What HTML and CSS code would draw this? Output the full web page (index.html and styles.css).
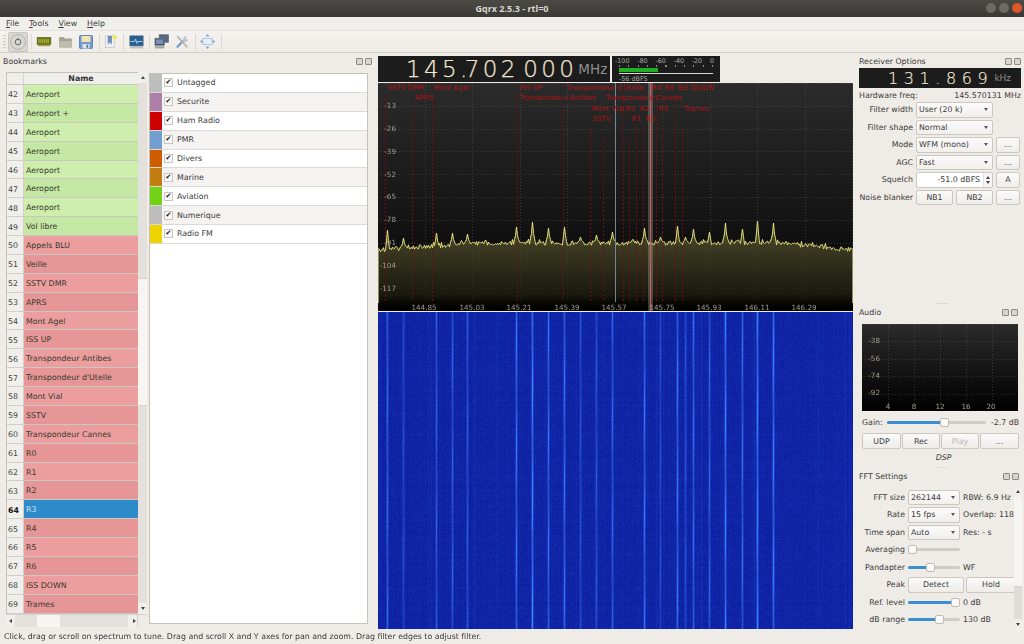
FILE: index.html
```html
<!DOCTYPE html>
<html lang="en">
<head>
<meta charset="utf-8">
<title>Gqrx 2.5.3 - rtl=0</title>
<link rel="stylesheet" href="styles.css">
</head>
<body>
<div class="app">
  <header class="titlebar">
    <span class="title">Gqrx 2.5.3 - rtl=0</span>
    <div class="winbtns"><i class="wb"></i><i class="wb"></i><i class="wb close"></i></div>
  </header>
  <nav class="menubar"><span><u>F</u>ile</span><span><u>T</u>ools</span><span><u>V</u>iew</span><span><u>H</u>elp</span></nav>
  <div class="toolbar">
    <div class="grip"></div>
    <button class="tb pressed"><svg width="16" height="16" viewBox="0 0 16 16"><circle cx="8" cy="8" r="7.5" fill="#d8d6d2" stroke="#b5b3af"/><circle cx="8" cy="8" r="2.8" fill="none" stroke="#666" stroke-width="1"/><path d="M8 4.2v2" stroke="#666"/></svg></button>
    <div class="sep s1"></div>
    <div class="ic"><svg width="16" height="11" viewBox="0 0 17 12"><rect x="1" y="1.5" width="15" height="8" fill="#6f7a18" stroke="#4a5212" stroke-width=".6"/><path d="M3 3.5v4M5 3.5v4M7 3.5v4M9 3.5v4M11 3.5v4M13 3.5v4" stroke="#b8c24a" stroke-width="1"/><rect x="2" y="9.5" width="13" height="1.6" fill="#a89a4a"/></svg></div>
    <div class="ic"><svg width="15" height="12" viewBox="0 0 16 13"><path d="M1 2.5Q1 1 2.5 1H6l1.5 1.8H14Q15 2.8 15 4V11.5Q15 12.4 14 12.4H2Q1 12.4 1 11.5Z" fill="#a5a395"/><path d="M1 5.5H15V11.5Q15 12.4 14 12.4H2Q1 12.4 1 11.5Z" fill="#bdbbab"/></svg></div>
    <div class="ic"><svg width="14" height="14" viewBox="0 0 14 14"><rect x=".5" y=".5" width="13" height="13" rx="1" fill="#6f9bcf" stroke="#4a7ab0" stroke-width=".8"/><rect x="2.5" y="1" width="9" height="6" fill="#f4e3b0"/><rect x="3.5" y="9" width="7" height="4.5" fill="#dfe3e8"/><rect x="7.5" y="9.7" width="1.6" height="3" fill="#4f6f95"/></svg></div>
    <div class="sep s2"></div>
    <div class="ic"><svg width="14" height="15" viewBox="0 0 15 15"><path d="M1.5 1.5H11V14H1.5Z" fill="#f1f2f4" stroke="#b9bcc2" stroke-width=".7"/><rect x="4" y="1.5" width="4.5" height="9" fill="#6f8fbc"/><path d="M4 10.5l2.2-2 2.3 2z" fill="#f1f2f4"/><circle cx="11.5" cy="3" r="2.3" fill="#f5e84a"/></svg></div>
    <div class="sep s3"></div>
    <div class="ic"><svg width="15" height="14" viewBox="0 0 16 15"><rect x=".5" y=".5" width="15" height="11.5" rx="1" fill="#2a5f92" stroke="#9aa4ae" stroke-width=".8"/><path d="M1.5 7H6l1-2.6L8.5 9l1-2h5" fill="none" stroke="#bfe4f5" stroke-width=".9"/><rect x="1" y="12.5" width="14" height="2" fill="#c2c2be"/></svg></div>
    <div class="sep s4"></div>
    <div class="ic"><svg width="15" height="15" viewBox="0 0 16 16"><rect x="5.5" y=".8" width="10" height="8" fill="#55678a" stroke="#666" stroke-width=".7"/><rect x="1" y="4.5" width="10" height="7.5" fill="#3d4e70" stroke="#777" stroke-width=".7"/><rect x="2.2" y="5.7" width="7.6" height="5" fill="#7a90b5"/><rect x="1" y="13" width="10" height="2.4" fill="#a3a39f"/></svg></div>
    <div class="ic"><svg width="14" height="14" viewBox="0 0 15 15"><path d="M2 13.5 9 6" stroke="#6f9ccb" stroke-width="2.4"/><path d="M2.5 1.5 13 13" stroke="#b4b8bc" stroke-width="2"/><path d="M9 6a3.2 3.2 0 0 1 4-4.4L11 3.6l1 1.4 2-1A3.2 3.2 0 0 1 10 7.5Z" fill="#bcc0c4"/></svg></div>
    <div class="sep s5"></div>
    <div class="ic"><svg width="15" height="15" viewBox="0 0 16 16"><rect x="3" y="4.7" width="10" height="6.6" fill="#e8eef5" stroke="#9dbbdb" stroke-width=".8"/><path d="M8 0 10 2.6H6ZM8 16 6 13.4H10ZM0 8 2.4 6V10ZM16 8 13.6 10V6Z" fill="#7aa3d0"/></svg></div>
    <div class="sep s6"></div>
  </div>

  <main class="main">
    <section class="bookmarks">
      <div class="dock-title"><span>Bookmarks</span><div class="floats"><i></i><i></i></div></div>
      <div class="bm-body">
        <div class="table">
          <div class="tbl-main">
            <div class="tbl-left">
              <div class="thead"><div class="corner"></div><div class="th">Name</div></div>
              <div class="rows">
                <div class="tr g1"><b>42</b><span>Aeroport</span></div>
                <div class="tr g2"><b>43</b><span>Aeroport +</span></div>
                <div class="tr g1"><b>44</b><span>Aeroport</span></div>
                <div class="tr g2"><b>45</b><span>Aeroport</span></div>
                <div class="tr g1"><b>46</b><span>Aeroport</span></div>
                <div class="tr g2"><b>47</b><span>Aeroport</span></div>
                <div class="tr g1"><b>48</b><span>Aeroport</span></div>
                <div class="tr g2"><b>49</b><span>Vol libre</span></div>
                <div class="tr r1"><b>50</b><span>Appels BLU</span></div>
                <div class="tr r2"><b>51</b><span>Veille</span></div>
                <div class="tr r1"><b>52</b><span>SSTV DMR</span></div>
                <div class="tr r2"><b>53</b><span>APRS</span></div>
                <div class="tr r1"><b>54</b><span>Mont Agel</span></div>
                <div class="tr r2"><b>55</b><span>ISS UP</span></div>
                <div class="tr r1"><b>56</b><span>Transpondeur Antibes</span></div>
                <div class="tr r2"><b>57</b><span>Transpondeur d'Utelle</span></div>
                <div class="tr r1"><b>58</b><span>Mont Vial</span></div>
                <div class="tr r2"><b>59</b><span>SSTV</span></div>
                <div class="tr r1"><b>60</b><span>Transpondeur Cannes</span></div>
                <div class="tr r2"><b>61</b><span>R0</span></div>
                <div class="tr r1"><b>62</b><span>R1</span></div>
                <div class="tr r2"><b>63</b><span>R2</span></div>
                <div class="tr sel"><b>64</b><span>R3</span></div>
                <div class="tr r2"><b>65</b><span>R4</span></div>
                <div class="tr r1"><b>66</b><span>R5</span></div>
                <div class="tr r2"><b>67</b><span>R6</span></div>
                <div class="tr r1"><b>68</b><span>ISS DOWN</span></div>
                <div class="tr r2"><b>69</b><span>Trames</span></div>
                <div class="tr p"><b></b><span></span></div>
              </div>
            </div>
            <div class="vscroll">
              <div class="sb-btn"><i class="up"></i></div>
              <div class="sb-a"></div><div class="sb-thumb"></div><div class="sb-b"></div>
              <div class="sb-btn"><i class="down"></i></div>
            </div>
          </div>
          <div class="hscroll">
            <div class="sb-btn"><i class="left"></i></div>
            <div class="hs-a"></div><div class="hs-thumb"></div><div class="hs-b"></div>
            <div class="sb-btn"><i class="right"></i></div>
            <div class="hs-corner"></div>
          </div>
        </div>
        <div class="tags">
          <div class="tag"><i class="sw c0"></i><span class="cb">✔</span><span>Untagged</span></div>
          <div class="tag alt"><i class="sw c1"></i><span class="cb">✔</span><span>Securite</span></div>
          <div class="tag"><i class="sw c2"></i><span class="cb">✔</span><span>Ham Radio</span></div>
          <div class="tag alt"><i class="sw c3"></i><span class="cb">✔</span><span>PMR</span></div>
          <div class="tag"><i class="sw c4"></i><span class="cb">✔</span><span>Divers</span></div>
          <div class="tag alt"><i class="sw c5"></i><span class="cb">✔</span><span>Marine</span></div>
          <div class="tag"><i class="sw c6"></i><span class="cb">✔</span><span>Aviation</span></div>
          <div class="tag alt"><i class="sw c0"></i><span class="cb">✔</span><span>Numerique</span></div>
          <div class="tag"><i class="sw c8"></i><span class="cb">✔</span><span>Radio FM</span></div>
        </div>
      </div>
    </section>

    <section class="center">
      <div class="readout">
        <div class="lcd"><span class="digits">145<span class="dot">.</span>702 000</span><span class="unit">MHz</span></div>
        <div class="meter">
          <div class="scale"><span>-100</span><span>-80</span><span>-60</span><span>-40</span><span>-20</span><span>0</span></div>
          <div class="ticks"></div>
          <div class="mbar"></div>
          <div class="mline"></div>
          <div class="mval">-56 dBFS</div>
        </div>
      </div>
      <div class="plot">
        <canvas id="spectrum" width="475" height="228"></canvas>
        <span class="bm" style="left:10px;top:0px">SSTV DMR</span>
        <span class="bm" style="left:56px;top:0px">Mont Agel</span>
        <span class="bm" style="left:37px;top:10px">APRS</span>
        <span class="bm" style="left:142px;top:0px">ISS UP</span>
        <span class="bm" style="left:142px;top:10px">Transpondeur Antibes</span>
        <span class="bm" style="left:189px;top:0px">Transpondeur d'Utelle</span>
        <span class="bm" style="left:228px;top:10px">Transpondeur Cannes</span>
        <span class="bm" style="left:214px;top:21px">Mont Vial</span>
        <span class="bm" style="left:215px;top:31px">SSTV</span>
        <span class="bm" style="left:248px;top:21px">R0</span>
        <span class="bm" style="left:262px;top:21px">R2</span>
        <span class="bm" style="left:281px;top:21px">R5</span>
        <span class="bm" style="left:306px;top:21px">Trames</span>
        <span class="bm" style="left:254px;top:31px">R1</span>
        <span class="bm" style="left:268px;top:31px">R3</span>
        <span class="bm" style="left:274px;top:0px">R4</span>
        <span class="bm" style="left:287px;top:0px">R6</span>
        <span class="bm" style="left:300px;top:0px">ISS DOWN</span>
        <span class="db" style="top:18px">-13</span>
        <span class="db" style="top:41px">-26</span>
        <span class="db" style="top:64px">-39</span>
        <span class="db" style="top:87px">-52</span>
        <span class="db" style="top:109px">-65</span>
        <span class="db" style="top:132px">-78</span>
        <span class="db" style="top:155px">-91</span>
        <span class="db" style="top:178px">-104</span>
        <span class="db" style="top:201px">-117</span>
        <span class="fq" style="left:46px">144.85</span>
        <span class="fq" style="left:94px">145.03</span>
        <span class="fq" style="left:141px">145.21</span>
        <span class="fq" style="left:189px">145.39</span>
        <span class="fq" style="left:236px">145.57</span>
        <span class="fq" style="left:284px">145.75</span>
        <span class="fq" style="left:331px">145.93</span>
        <span class="fq" style="left:379px">146.11</span>
        <span class="fq" style="left:426px">146.29</span>
      </div>
      <canvas id="waterfall" class="wf" width="475" height="317"></canvas>
    </section>

    <aside class="right">
      <section class="rx">
        <div class="dock-title"><span>Receiver Options</span><div class="floats"><i></i><i></i></div></div>
        <div class="lcd2"><span class="digits2">131.869</span><span class="unit2">kHz</span></div>
        <div class="hw"><span>Hardware freq:</span><span>145.570131 MHz</span></div>
        <div class="form">
          <label>Filter width</label><div class="combo wide">User (20 k)<i></i></div><div></div>
          <label>Filter shape</label><div class="combo wide">Normal<i></i></div><div></div>
          <label>Mode</label><div class="combo wide">WFM (mono)<i></i></div><button class="btn">...</button>
          <label>AGC</label><div class="combo wide">Fast<i></i></div><button class="btn">...</button>
          <label>Squelch</label><div class="spin"><span>-51.0 dBFS</span><div class="arrows"><i class="up"></i><i class="down"></i></div></div><button class="btn">A</button>
          <label>Noise blanker</label><div class="two"><button class="btn">NB1</button><button class="btn">NB2</button></div><button class="btn">...</button>
        </div>
      </section>
      <div class="grip-h g-a"></div>
      <section class="audio">
        <div class="dock-title"><span>Audio</span><div class="floats"><i></i><i></i></div></div>
        <div class="aplot">
          <canvas id="audioplot" width="156" height="87"></canvas>
          <span class="adb" style="top:12px">-38</span>
          <span class="adb" style="top:30px">-56</span>
          <span class="adb" style="top:47px">-74</span>
          <span class="adb" style="top:64px">-92</span>
          <span class="afq" style="left:26px">4</span>
          <span class="afq" style="left:52px">8</span>
          <span class="afq" style="left:78px">12</span>
          <span class="afq" style="left:104px">16</span>
          <span class="afq" style="left:129px">20</span>
        </div>
        <div class="gain"><span>Gain:</span><div class="slider s-gain"><div class="fill" style="width:58%"></div><i class="knob" style="left:58%"></i></div><span class="gval">-2.7 dB</span></div>
        <div class="abtns"><button class="btn">UDP</button><button class="btn">Rec</button><button class="btn off">Play</button><button class="btn">...</button></div>
        <div class="dsp">DSP</div>
      </section>
      <div class="grip-h g-b"></div>
      <section class="fft">
        <div class="dock-title"><span>FFT Settings</span><div class="floats"><i></i><i></i></div></div>
        <div class="fft-body">
          <div class="fft-form">
            <label>FFT size</label><div class="combo">262144<i></i></div><span class="note">RBW: 6.9 Hz</span>
            <label>Rate</label><div class="combo">15 fps<i></i></div><span class="note">Overlap: 118</span>
            <label>Time span</label><div class="combo">Auto<i></i></div><span class="note">Res: - s</span>
            <label>Averaging</label><div class="slider"><i class="knob" style="left:4px"></i></div><span></span>
            <label>Pandapter</label><div class="slider"><div class="fill" style="width:43%"></div><i class="knob" style="left:43%"></i></div><span class="note">WF</span>
            <label>Peak</label><div class="peak"><button class="btn">Detect</button><button class="btn">Hold</button></div>
            <label>Ref. level</label><div class="slider"><div class="fill" style="width:90%"></div><i class="knob" style="left:90%"></i></div><span class="note">0 dB</span>
            <label>dB range</label><div class="slider"><div class="fill" style="width:60%"></div><i class="knob" style="left:60%"></i></div><span class="note">130 dB</span>
          </div>
          <div class="vscroll fs">
            <div class="sb-btn"><i class="up"></i></div>
            <div class="sb-thumb2"></div><div class="sb-b2"></div>
            <div class="sb-btn"><i class="down"></i></div>
          </div>
        </div>
      </section>
    </aside>
  </main>
  <footer class="status">Click, drag or scroll on spectrum to tune. Drag and scroll X and Y axes for pan and zoom. Drag filter edges to adjust filter.</footer>
</div>
<script src="plots.js"></script>
</body>
</html>
```
FILE: styles.css
```css
* { box-sizing: border-box; }
html, body { margin: 0; padding: 0; }
body { font: 7.85px "DejaVu Sans", sans-serif; color: #3c3c3c; background: #efebe7; overflow: hidden; }
.app { width: 1024px; height: 644px; display: flex; flex-direction: column; overflow: hidden; }
button { font: inherit; color: inherit; padding: 0; }

.titlebar { height: 17px; flex: none; background: linear-gradient(#4b4a45, #3a3935); color: #d8d6d0; display: flex; align-items: center; justify-content: center; position: relative; }
.title { font: bold 9px "Open Sans", "DejaVu Sans", sans-serif; }
.winbtns { position: absolute; right: 2px; top: 3px; display: flex; gap: 3px; }
.wb { width: 10px; height: 10px; border-radius: 50%; background: #6b6a64; display: block; }
.wb.close { background: #e0562a; }

.menubar { height: 13px; flex: none; background: #f1efeb; display: flex; gap: 10px; padding-left: 6px; align-items: center; }
.toolbar { height: 23px; flex: none; background: linear-gradient(#f5f3ef, #efebe7); border-top: 1px solid #e4e1dc; border-bottom: 1px solid #d2cec8; display: flex; align-items: center; padding-left: 3px; }
.grip { width: 3px; height: 14px; margin-right: 2px; background: repeating-linear-gradient(#cfccc6 0 1px, transparent 1px 3px); }
.tb { width: 20px; height: 20px; border: 1px solid #c8c5bf; border-radius: 2px; background: #dbd8d3; display: flex; align-items: center; justify-content: center; }
.ic { width: 21px; height: 20px; display: flex; align-items: center; justify-content: center; }
.sep { width: 1px; height: 16px; background: #dcd9d3; flex: none; }
.s1 { margin: 0 1.5px 0 3px; }
.s2 { margin: 0 .5px 0 2.5px; }
.s3 { margin: 0 1.5px 0 1.5px; }
.s4 { margin: 0 .5px 0 2.5px; }
.s5 { margin: 0 .5px 0 2.5px; }
.s6 { margin: 0 0 0 3.5px; }

.main { flex: 1; display: flex; min-height: 0; }
.dock-title { height: 19px; display: flex; align-items: center; justify-content: space-between; padding: 0 0 0 3px; flex: none; }
.floats { display: flex; gap: 2px; }
.floats i { width: 7px; height: 7px; display: block; border: 1px solid #8f8c86; background: #d8d5cf; border-radius: 1px; }

.bookmarks { width: 378px; flex: none; padding-right: 6px; }
.bookmarks .dock-title { padding-bottom: 2px; }
.bm-body { display: flex; gap: 2px; padding-left: 6px; height: 555px; }
.table { width: 141px; height: 555px; flex: none; display: flex; flex-direction: column; }
.tbl-main { flex: 1; display: flex; min-height: 0; }
.tbl-left { width: 132px; flex: none; display: flex; flex-direction: column; border-left: 1px solid #c6c3bd; border-top: 1px solid #c6c3bd; }
.thead { height: 12px; flex: none; display: flex; background: #f0eeea; border-bottom: 1px solid #c9c6c0; }
.corner { width: 17px; border-right: 1px solid #d8d5cf; }
.th { flex: 1; text-align: center; font-weight: bold; line-height: 11px; color: #333; }
.rows { flex: 1; overflow: hidden; }
.tr { height: 18.875px; display: flex; align-items: center; }
.tr b { width: 17px; height: 100%; flex: none; font-weight: normal; background: #f1efeb; border-right: 1px solid #d2cfc9; border-bottom: 1px solid #d2cfc9; display: flex; align-items: center; padding: 2px 0 0 1px; color: #444; }
.tr span { flex: 1; height: 100%; line-height: 17.5px; padding: 1px 0 0 2px; border-bottom: 1px solid #c8c8c0; color: #3a3a30; white-space: nowrap; }
.g1 span { background: #cdeeac; }
.g2 span { background: #c4e7a3; }
.r1 span { background: #ec9e9e; }
.r2 span { background: #e69696; }
.sel span { background: #2e8bc9; color: #cfe4f4; }
.sel b { font-weight: bold; color: #111; }
.p span { background: #f1c9a2; }

.vscroll { width: 9px; flex: none; display: flex; flex-direction: column; background: #e4e1dc; }
.sb-btn { height: 11px; flex: none; background: #f1efeb; display: flex; align-items: center; justify-content: center; }
.sb-btn i, .arrows i { display: block; width: 0; height: 0; border-style: solid; border-color: transparent; }
i.up { border-width: 0 2.5px 3px; border-bottom-color: #444; }
i.down { border-width: 3px 2.5px 0; border-top-color: #444; }
i.left { border-width: 2.5px 3px 2.5px 0; border-right-color: #444; }
i.right { border-width: 2.5px 0 2.5px 3px; border-left-color: #444; }
.sb-a { height: 195px; background: #e4e1dc; }
.sb-thumb { height: 128px; background: #f6f5f2; border-top: 1px solid #d5d2cc; border-bottom: 1px solid #d5d2cc; }
.sb-b { flex: 1; background: #e4e1dc; }
.hscroll { height: 13px; flex: none; display: flex; background: #e4e1dc; border-top: 1px solid #d5d2cc; }
.hscroll .sb-btn { width: 9px; height: 12px; }
.hs-a { width: 22px; }
.hs-thumb { width: 23px; background: #f6f5f2; }
.hs-b { width: 68px; }
.hs-corner { width: 10px; background: #efebe7; border-left: 1px solid #d5d2cc; }

.tags { width: 219px; height: 551px; margin-top: 1px; flex: none; background: #fff; border: 1px solid #c6c3bd; }
.tag { height: 18.875px; display: flex; align-items: center; border-bottom: 1px solid #dcdad6; background: #fff; }
.tag.alt { background: #f4f3f1; }
.sw { width: 12px; height: 100%; flex: none; display: block; margin-right: 2px; }
.c0 { background: #bdbdbd; } .c1 { background: #ad7fa8; } .c2 { background: #cc0000; } .c3 { background: #729fcf; }
.c4 { background: #ce5c00; } .c5 { background: #c17d11; } .c6 { background: #73d216; } .c8 { background: #edd400; }
.cb { width: 9px; height: 9px; flex: none; margin-right: 4px; border: 1px solid #c9c6c0; background: #fafafa; font-size: 7px; line-height: 7px; text-align: center; color: #111; }

.center { width: 475px; flex: none; display: flex; flex-direction: column; padding-top: 3px; }
.readout { height: 26px; display: flex; gap: 2px; flex: none; margin-bottom: 1px; }
.lcd { width: 232px; background: #1c1c1c; display: flex; align-items: center; padding-left: 28px; color: #f3e6d0; }
.digits { font: 200 23px "DejaVu Sans", sans-serif; letter-spacing: 3.4px; word-spacing: -6.2px; white-space: pre; -webkit-text-stroke: .25px #f3e6d0; }
.dot { letter-spacing: -2.8px; }
.unit { font-size: 13.5px; color: #8e8e8e; margin-left: 1px; }
.meter { width: 108px; background: #1c1c1c; position: relative; color: #a9a9a9; font-size: 6.4px; }
.scale { display: flex; justify-content: space-between; padding: 1px 6px 0 3px; height: 9px; line-height: 8px; }
.ticks { height: 2px; margin: 0 7px 1px; background: repeating-linear-gradient(90deg, #888 0 1px, transparent 1px 9.3px); }
.mbar { width: 39px; height: 4px; background: #22b022; margin: 0 0 0 7px; }
.mline { height: 1px; width: 94px; background: #d8d8d8; margin: 1px 0 0 7px; }
.mval { padding: 2px 0 0 7px; line-height: 7px; }
.plot { width: 475px; height: 228px; position: relative; flex: none; margin-bottom: 1px; }
.plot canvas, .aplot canvas { display: block; }
.bm { position: absolute; color: #b81414; line-height: 9px; white-space: nowrap; font-size: 7.05px; }
.db { position: absolute; right: calc(100% - 18px); color: #a39a8c; line-height: 9px; font-size: 7.2px; }
.fq { position: absolute; top: 220px; color: #a39a8c; line-height: 9px; font-size: 7.2px; transform: translateX(-50%); }
.wf { display: block; width: 475px; height: 317px; flex: none; }

.right { flex: 1; margin-left: 5px; display: flex; flex-direction: column; min-width: 0; }
.right .dock-title { padding-left: 1px; padding-right: 3px; height: 14px; margin-top: 1px; }
.rx { height: 250px; flex: none; padding-right: 3px; }
.rx .dock-title { padding-right: 0; }
.lcd2 { margin: 0 0 0 1px; height: 20px; background: #1c1c1c; color: #f3e6d0; display: flex; align-items: center; padding-left: 29px; }
.digits2 { font: 200 16px "DejaVu Sans", sans-serif; letter-spacing: 5.6px; -webkit-text-stroke: .2px #f3e6d0; }
.unit2 { font-size: 9px; color: #8e8e8e; margin-left: 1px; }
.hw { display: flex; justify-content: space-between; margin: 2px 0 0 1px; height: 11px; line-height: 11px; }
.form { display: grid; grid-template-columns: 54px 77px 24px; column-gap: 3px; row-gap: 2px; grid-auto-rows: 15.5px; margin: 1px 0 0 1px; }
label { text-align: right; white-space: nowrap; align-self: center; justify-self: end; }
.combo { background: linear-gradient(#fcfbfa, #f1efec); border: 1px solid #cbc8c2; border-radius: 2px; padding-left: 2px; display: flex; align-items: center; justify-content: space-between; white-space: nowrap; }
.combo i { display: block; width: 0; height: 0; border: 2px solid transparent; border-top: 3px solid #555; border-bottom: 0; margin-right: 4px; }
.btn { background: linear-gradient(#fbfaf9, #efedea); border: 1px solid #cbc8c2; border-radius: 2px; min-width: 0; }
.spin { background: #fff; border: 1px solid #cbc8c2; border-radius: 2px; display: flex; align-items: center; justify-content: flex-end; }
.arrows { width: 9px; height: 100%; margin-left: 3px; display: flex; flex-direction: column; align-items: center; justify-content: center; gap: 2px; background: #f6f5f3; border-left: 1px solid #e4e1dc; }
.two { display: grid; grid-template-columns: 37px 37px; gap: 3px; }

.grip-h { height: 1px; flex: none; }
.g-a { width: 12px; margin-left: 78px; background: #dcd9d3; }
.g-b { width: 12px; margin-left: 78px; background: #e3e0da; }
.audio { height: 163px; flex: none; padding-right: 3px; }
.aplot { position: relative; width: 156px; height: 87px; margin-left: 4px; margin-top: 5px; }
.adb { position: absolute; right: calc(100% - 18px); color: #a39a8c; line-height: 9px; font-size: 7.2px; }
.afq { position: absolute; top: 78px; color: #a39a8c; line-height: 9px; font-size: 7.2px; transform: translateX(-50%); }
.gain { display: flex; align-items: center; height: 13px; margin: 5px 0 0 4px; }
.gain > span:first-child { width: 25px; }
.slider { position: relative; height: 3px; background: #cfccc6; border-radius: 2px; align-self: center; }
.s-gain { width: 99px; }
.fill { height: 3px; background: #3b8fd0; border-radius: 2px; }
.knob { position: absolute; top: -3px; width: 9px; height: 9px; margin-left: -4px; background: #fbfaf9; border: 1px solid #bdbab4; border-radius: 2px; display: block; }
.gval { margin-left: 5px; white-space: nowrap; }
.abtns { display: grid; grid-template-columns: 39px 38px 38px 39px; gap: 0 1px; height: 16px; margin: 4px 0 0 4px; }
.btn.off { color: #b9b6b0; }
.dsp { text-align: center; font-style: italic; margin-left: 8px; line-height: 10px; margin-top: 4px; }

.fft { flex: 1; min-height: 0; padding-right: 2px; }
.fft-body { display: flex; height: 144px; margin-top: 3px; }
.fft-form { width: 156px; overflow: hidden; display: grid; grid-template-columns: 47px 52px 60px; column-gap: 3px; row-gap: 2px; grid-auto-rows: 15.5px; align-items: stretch; padding-top: 3.5px; }
.note { align-self: center; white-space: nowrap; }
.peak { grid-column: span 2; display: grid; grid-template-columns: 56px 50px; gap: 2px; }
.vscroll.fs { width: 8px; }
.sb-thumb2 { height: 89px; background: #f6f5f2; }
.sb-b2 { flex: 1; background: #e0ddd8; border-top: 1px solid #d5d2cc; }

.status { height: 14px; flex: none; line-height: 14px; padding-left: 4px; white-space: nowrap; overflow: hidden; }
```
FILE: plots.js
```js
(function () {
  var seed = 12345;
  function rnd() { seed = (seed * 1664525 + 1013904223) >>> 0; return seed / 4294967296; }

  // [x in plot, top of peak in plot y, half width]
  var peaks = [[9, 147, 1], [25, 155, 3], [58, 150, 1], [74, 150, 2], [89, 151, 2], [138, 144, 2], [154, 139, 2],
    [170, 145, 2], [186, 144, 1], [202, 154, 3], [218, 152, 3], [234, 149, 2], [266, 145, 2], [282, 154, 2],
    [299, 143, 1], [307, 154, 2], [315, 146, 2], [331, 149, 1], [347, 140, 2], [364, 146, 1], [379, 138, 1], [395, 140, 2]];
  var W = 475, i, x;
  var trace = [];
  function baseAt(px) {
    if (px < 100) return 167 - 7 * px / 100;
    if (px > 400) return 160 + (px - 400) / 75 * 7;
    return 160;
  }
  for (x = 0; x < W; x++) trace[x] = baseAt(x) + (rnd() - 0.5) * 4.5 - (rnd() > 0.88 ? 2.5 : 0);
  peaks.forEach(function (p) {
    for (i = -p[2]; i <= p[2]; i++) {
      var px = p[0] + i;
      if (px < 0 || px >= W) continue;
      var t = baseAt(px) + (p[1] - baseAt(px)) * (i === 0 ? 1 : 0.45 / Math.abs(i));
      trace[px] = Math.min(trace[px], t);
    }
  });

  var c = document.getElementById('spectrum').getContext('2d');
  var g = c.createLinearGradient(0, 0, 0, 228);
  g.addColorStop(0, '#2b2b2b'); g.addColorStop(0.6, '#141414'); g.addColorStop(1, '#000');
  c.fillStyle = g; c.fillRect(0, 0, W, 228);

  // grid
  c.strokeStyle = 'rgba(140,140,140,0.28)'; c.lineWidth = 1; c.setLineDash([1, 2]);
  for (i = 0; i < 10; i++) { var yy = Math.round(22.8 * i) + 0.5; c.beginPath(); c.moveTo(0, yy); c.lineTo(W, yy); c.stroke(); }
  for (i = 0; i < 10; i++) { var xx = Math.round(46.5 + 47.5 * i) + 0.5; c.beginPath(); c.moveTo(xx, 0); c.lineTo(xx, 218); c.stroke(); }
  c.setLineDash([]);

  // fill under the trace
  var f = c.createLinearGradient(0, 150, 0, 228);
  f.addColorStop(0, 'rgba(84,82,46,0.8)'); f.addColorStop(0.8, 'rgba(40,38,22,0.6)'); f.addColorStop(1, 'rgba(0,0,0,0)');
  c.fillStyle = f;
  c.beginPath(); c.moveTo(0, 228);
  for (x = 0; x < W; x++) c.lineTo(x, trace[x]);
  c.lineTo(W, 228); c.closePath(); c.fill();

  // bookmark markers
  var marks = [[7, 12], [34, 22], [54, 12], [139, 12], [185, 22], [212, 44], [225, 55], [245, 12], [251, 55], [258, 44], [265, 44], [278, 12], [284, 44], [297, 12], [304, 44]];
  c.setLineDash([2, 2]); c.strokeStyle = '#6e1010';
  marks.forEach(function (m) { c.beginPath(); c.moveTo(m[0] + 0.5, m[1]); c.lineTo(m[0] + 0.5, 218); c.stroke(); });
  c.setLineDash([]);

  // trace
  c.strokeStyle = '#e4e07c'; c.lineWidth = 1; c.beginPath();
  for (x = 0; x < W; x++) { if (x) c.lineTo(x + 0.5, trace[x]); else c.moveTo(0.5, trace[0]); }
  c.stroke();
  c.fillStyle = '#8f8c55'; c.fillRect(0, trace[0], 1, 228 - trace[0] - 8); c.fillRect(W - 1, trace[W - 1], 1, 228 - trace[W - 1] - 8);

  // demod line + filter
  c.fillStyle = '#7b8494'; c.fillRect(237, 0, 1, 219);
  c.fillStyle = 'rgba(190,190,190,0.3)'; c.fillRect(270, 0, 5, 228);
  c.fillStyle = '#d8584e'; c.fillRect(272, 0, 1, 228);

  // waterfall
  var wc = document.getElementById('waterfall').getContext('2d');
  var H = 317, img = wc.createImageData(W, H), d = img.data;
  var col = [];
  for (x = 0; x < W; x++) col[x] = (rnd() - 0.5) * 6 + (rnd() > 0.94 ? rnd() * 16 : 0);
  peaks.forEach(function (p) {
    var s = (164 - p[1]) * 3.6 + 16;
    col[p[0]] += s;
    if (p[0] > 0) col[p[0] - 1] += s * 0.35;
    if (p[0] < W - 1) col[p[0] + 1] += s * 0.35;
  });
  for (var y = 0; y < H; y++) {
    var rowb = (rnd() - 0.5) * 4;
    for (x = 0; x < W; x++) {
      var seg = Math.sin(y / 17 + x) * 0.2 + 0.85;
      var v = col[x] * seg + (rnd() - 0.5) * 14 + rowb;
      if (v < -12) v = -12;
      var k = (x * 4) + y * W * 4;
      d[k] = 16 + v * 0.38;
      d[k + 1] = 36 + v * 0.85;
      d[k + 2] = 166 + v * 0.9;
      d[k + 3] = 255;
    }
  }
  wc.putImageData(img, 0, 0);

  // audio plot
  var a = document.getElementById('audioplot').getContext('2d');
  var ag = a.createLinearGradient(0, 0, 0, 87);
  ag.addColorStop(0, '#2b2b2b'); ag.addColorStop(1, '#000');
  a.fillStyle = ag; a.fillRect(0, 0, 156, 87);
  a.strokeStyle = 'rgba(140,140,140,0.28)'; a.setLineDash([1, 2]);
  for (i = 0; i < 5; i++) { var ay = Math.round(17.4 * i) + 0.5; a.beginPath(); a.moveTo(0, ay); a.lineTo(156, ay); a.stroke(); }
  for (i = 1; i < 6; i++) { var ax = Math.round(26 * i) + 0.5; a.beginPath(); a.moveTo(ax, 0); a.lineTo(ax, 87); a.stroke(); }
})();
```
